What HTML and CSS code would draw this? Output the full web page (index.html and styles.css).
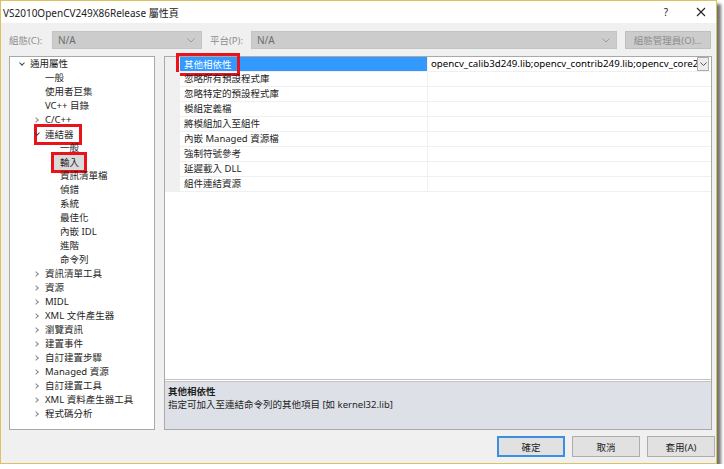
FILE: index.html
```html
<!DOCTYPE html>
<html lang="zh-Hant">

<head>
  <meta charset="UTF-8" />
  <title>VS2010OpenCV249X86Release 屬性頁</title>
  <link rel="stylesheet" href="styles.css">
</head>

<body>
  <div class="window">
    <div class="titlebar">
      <span class="title">VS2010OpenCV249X86Release 屬性頁</span>
      <span class="help">?</span>
      <svg class="close" width="10" height="10" viewBox="0 0 10 10">
        <path d="M1 1 L9 9 M9 1 L1 9" stroke="#222" stroke-width="1.1" fill="none" />
      </svg>
    </div>

    <div class="toolbar">
      <span class="label l-conf">組態(C):</span>
      <div class="combo c-conf">
        <span>N/A</span>
        <svg width="8" height="5" viewBox="0 0 8 5"><path d="M0.5 0.5 L4 4 L7.5 0.5" stroke="#9a9a9a" fill="none" /></svg>
      </div>
      <span class="label l-plat">平台(P):</span>
      <div class="combo c-plat">
        <span>N/A</span>
        <svg width="8" height="5" viewBox="0 0 8 5"><path d="M0.5 0.5 L4 4 L7.5 0.5" stroke="#9a9a9a" fill="none" /></svg>
      </div>
      <button class="mgr" disabled>組態管理員(O)...</button>
    </div>

    <div class="main">
      <div class="tree">
        <div class="node l0"><i class="arr open"></i>通用屬性</div>
        <div class="node l1">一般</div>
        <div class="node l1">使用者巨集</div>
        <div class="node l1">VC++ 目錄</div>
        <div class="node l1"><i class="arr"></i>C/C++</div>
        <div class="node l1"><i class="arr open"></i><span class="mark m-linker">連結器</span></div>
        <div class="node l2">一般</div>
        <div class="node l2"><span class="mark m-input">輸入</span></div>
        <div class="node l2">資訊清單檔</div>
        <div class="node l2">偵錯</div>
        <div class="node l2">系統</div>
        <div class="node l2">最佳化</div>
        <div class="node l2">內嵌 IDL</div>
        <div class="node l2">進階</div>
        <div class="node l2">命令列</div>
        <div class="node l1"><i class="arr"></i>資訊清單工具</div>
        <div class="node l1"><i class="arr"></i>資源</div>
        <div class="node l1"><i class="arr"></i>MIDL</div>
        <div class="node l1"><i class="arr"></i>XML 文件產生器</div>
        <div class="node l1"><i class="arr"></i>瀏覽資訊</div>
        <div class="node l1"><i class="arr"></i>建置事件</div>
        <div class="node l1"><i class="arr"></i>自訂建置步驟</div>
        <div class="node l1"><i class="arr"></i>Managed 資源</div>
        <div class="node l1"><i class="arr"></i>自訂建置工具</div>
        <div class="node l1"><i class="arr"></i>XML 資料產生器工具</div>
        <div class="node l1"><i class="arr"></i>程式碼分析</div>
      </div>

      <div class="panel">
        <div class="grid">
          <div class="row selected">
            <div class="gutter"></div>
            <div class="name"><span class="mark m-prop">其他相依性</span></div>
            <div class="value">
              <span class="text">opencv_calib3d249.lib;opencv_contrib249.lib;opencv_core249.lib</span>
              <span class="drop">
                <svg width="7" height="4" viewBox="0 0 7 4"><path d="M0.5 0.5 L3.5 3.5 L6.5 0.5" stroke="#555" fill="none" /></svg>
              </span>
            </div>
          </div>
          <div class="row"><div class="gutter"></div><div class="name">忽略所有預設程式庫</div><div class="value"></div></div>
          <div class="row"><div class="gutter"></div><div class="name">忽略特定的預設程式庫</div><div class="value"></div></div>
          <div class="row"><div class="gutter"></div><div class="name">模組定義檔</div><div class="value"></div></div>
          <div class="row"><div class="gutter"></div><div class="name">將模組加入至組件</div><div class="value"></div></div>
          <div class="row"><div class="gutter"></div><div class="name">內嵌 Managed 資源檔</div><div class="value"></div></div>
          <div class="row"><div class="gutter"></div><div class="name">強制符號參考</div><div class="value"></div></div>
          <div class="row"><div class="gutter"></div><div class="name">延遲載入 DLL</div><div class="value"></div></div>
          <div class="row"><div class="gutter"></div><div class="name">組件連結資源</div><div class="value"></div></div>
        </div>
        <div class="desc">
          <div class="desc-title">其他相依性</div>
          <div class="desc-text">指定可加入至連結命令列的其他項目 [如 kernel32.lib]</div>
        </div>
      </div>
    </div>

    <div class="footer">
      <button class="btn default">確定</button>
      <button class="btn">取消</button>
      <button class="btn">套用(A)</button>
    </div>
  </div>
</body>

</html>
```

FILE: styles.css
```css
* {
  box-sizing: border-box;
  margin: 0;
  padding: 0;
}

body {
  background-color: #fff;
  font-family: "Noto Sans", "Noto Sans CJK TC", sans-serif;
  font-size: 9.5px;
  color: #1e1e1e;
}

.window {
  width: 717px;
  height: 464px;
  border: 1px solid #dcc25e;
  background-color: #f0f0f0;
  box-shadow: 4px 4px 3px rgba(0, 0, 0, 0.55);
}

/* Title bar */
.titlebar {
  height: 22px;
  background-color: #fff;
  display: flex;
  align-items: center;
  padding-left: 2px;
}

.title {
  font-size: 10px;
  color: #222;
  flex: 1;
}

.help {
  font-size: 10px;
  color: #222;
  margin-right: 28px;
}

.close {
  margin-right: 10px;
}

/* Configuration bar */
.toolbar {
  display: flex;
  align-items: center;
  padding: 8px 0 0 8px;
  height: 26px;
}

.label {
  color: #8d8d8d;
}

.l-conf {
  width: 43px;
}

.l-plat {
  width: 41px;
  margin-left: 8px;
}

.combo {
  height: 18px;
  background-color: #cccccc;
  border: 1px solid #c4c4c4;
  display: flex;
  align-items: center;
  justify-content: space-between;
  padding: 0 6px 0 5px;
  color: #6d6d6d;
  font-size: 10px;
}

.c-conf {
  width: 150px;
}

.c-plat {
  width: 366px;
}

.mgr {
  width: 86px;
  height: 18px;
  margin-left: 8px;
  background-color: #cccccc;
  border: 1px solid #bfbfbf;
  color: #8d8d8d;
  font-family: inherit;
  font-size: 9.5px;
}

/* Main area */
.main {
  display: flex;
  gap: 9px;
  padding: 0 0 0 8px;
  margin-top: 7px;
  height: 374px;
}

.tree {
  width: 146px;
  background-color: #fff;
  border: 1px solid #a9a9a9;
}

.node {
  height: 14px;
  line-height: 14px;
  display: flex;
  align-items: center;
  white-space: nowrap;
}

.l0 {
  padding-left: 8px;
}

.l1 {
  padding-left: 35px;
}

.l2 {
  padding-left: 50px;
}

.l1 .arr {
  margin-left: -12px;
}

.arr {
  width: 12px;
  height: 14px;
  display: inline-block;
  position: relative;
}

.arr::before {
  content: "";
  position: absolute;
  left: 1px;
  top: 5px;
  width: 3px;
  height: 3px;
  border-right: 1px solid #8a8a8a;
  border-bottom: 1px solid #8a8a8a;
  transform: rotate(-45deg);
}

.arr.open::before {
  left: 2px;
  top: 4px;
  border-color: #444;
  transform: rotate(45deg);
}

.mark {
  display: inline-block;
  line-height: 15px;
  outline: 3px solid #e8131b;
}

.m-linker {
  padding: 0 5px 0 8px;
  margin-left: -8px;
  outline-offset: 0;
}

.m-input {
  background-color: #dadada;
  padding: 0 5px 0 6px;
  margin-left: -6px;
  outline-offset: 0;
}

/* Property grid */
.panel {
  width: 548px;
  border: 1px solid #a9a9a9;
  background-color: #fff;
  display: flex;
  flex-direction: column;
}

.grid {
  flex: 1;
  border-bottom: 3px double #c3c3c3;
}

.row {
  display: flex;
  height: 15px;
  line-height: 14px;
}

.gutter {
  width: 15px;
  background-color: #f0f0f0;
}

.name {
  width: 248px;
  padding-left: 4px;
  border-bottom: 1px solid #f0f0f0;
  border-right: 1px solid #f0f0f0;
}

.value {
  flex: 1;
  display: flex;
  border-bottom: 1px solid #f0f0f0;
  padding-left: 3px;
  font-size: 9.7px;
  color: #000;
  overflow: hidden;
}

.value .text {
  flex: 1;
  overflow: hidden;
  white-space: nowrap;
}

.drop {
  width: 12px;
  height: 14px;
  margin-right: 2px;
  border: 1px solid #acacac;
  background-color: #ececec;
  display: flex;
  align-items: center;
  justify-content: center;
}

.selected .name {
  background-color: #3399ff;
  color: #fff;
}

.m-prop {
  padding: 0 4px;
  margin-left: -4px;
  outline-offset: 1px;
}

.desc {
  height: 47px;
  background-color: #dde0e7;
  padding: 3px 3px;
  line-height: 13px;
}

.desc-title {
  font-weight: bold;
}

/* Buttons */
.footer {
  display: flex;
  justify-content: flex-end;
  gap: 7px;
  margin-top: 6px;
  padding-right: 1px;
}

.btn {
  width: 68px;
  height: 21px;
  background-color: #e1e1e1;
  border: 1px solid #adadad;
  font-family: inherit;
  font-size: 9.5px;
  color: #1e1e1e;
}

.btn.default {
  border: 2px solid #3c8fe0;
}
```
